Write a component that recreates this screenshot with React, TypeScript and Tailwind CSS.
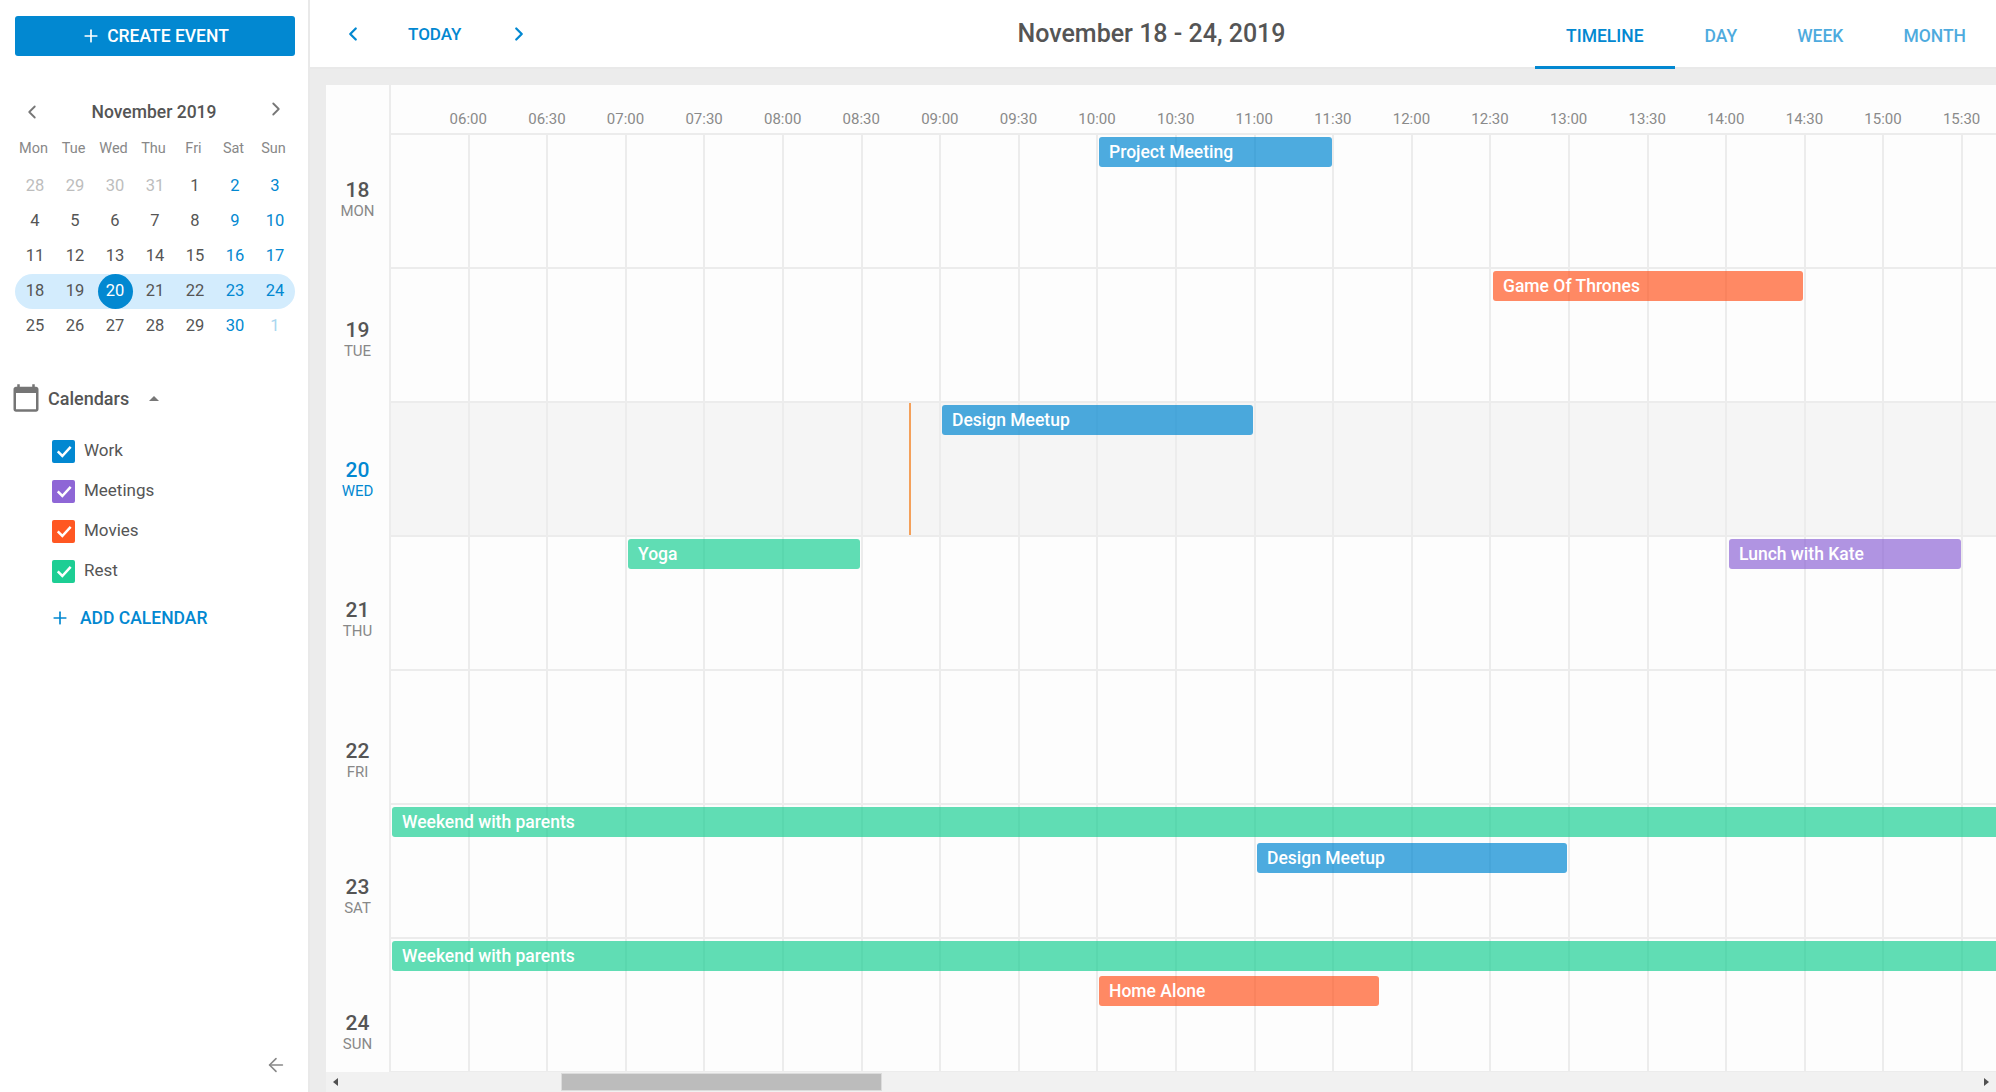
import { ArrowLeft, ChevronLeft, ChevronRight, Plus } from "lucide-react";

const weeks = [
  [28, 29, 30, 31, 1, 2, 3],
  [4, 5, 6, 7, 8, 9, 10],
  [11, 12, 13, 14, 15, 16, 17],
  [18, 19, 20, 21, 22, 23, 24],
  [25, 26, 27, 28, 29, 30, 1],
];

const calendars = [
  { name: "Work", color: "bg-[#0288d1]" },
  { name: "Meetings", color: "bg-[#8e66d6]" },
  { name: "Movies", color: "bg-[#ff5722]" },
  { name: "Rest", color: "bg-[#1dce94]" },
];

const times = [
  "06:00", "06:30", "07:00", "07:30", "08:00", "08:30", "09:00", "09:30", "10:00", "10:30",
  "11:00", "11:30", "12:00", "12:30", "13:00", "13:30", "14:00", "14:30", "15:00", "15:30",
];

const days = [
  { num: 18, name: "MON", h: "h-[140px]" },
  { num: 19, name: "TUE", h: "h-[141px]" },
  { num: 20, name: "WED", h: "h-[139px]", today: true },
  { num: 21, name: "THU", h: "h-[141px]" },
  { num: 22, name: "FRI", h: "h-[140px]" },
  { num: 23, name: "SAT", h: "h-[132px]" },
  { num: 24, name: "SUN", h: "h-[140px]" },
];

const blue = "bg-[#0288d1]/70";
const orange = "bg-[#ff5722]/70";
const purple = "bg-[#8e66d6]/70";
const green = "bg-[#1dce94]/70";

const rows = [
  [{ title: "Project Meeting", pos: "left-[708px] top-[2px] w-[233px]", color: blue }],
  [{ title: "Game Of Thrones", pos: "left-[1102px] top-[2px] w-[310px]", color: orange }],
  [{ title: "Design Meetup", pos: "left-[551px] top-[2px] w-[311px]", color: blue }],
  [
    { title: "Yoga", pos: "left-[237px] top-[2px] w-[232px]", color: green },
    { title: "Lunch with Kate", pos: "left-[1338px] top-[2px] w-[232px]", color: purple },
  ],
  [],
  [
    { title: "Weekend with parents", pos: "left-[1px] top-[2px] w-[1700px]", color: green },
    { title: "Design Meetup", pos: "left-[866px] top-[38px] w-[310px]", color: blue },
  ],
  [
    { title: "Weekend with parents", pos: "left-[1px] top-[2px] w-[1700px]", color: green },
    { title: "Home Alone", pos: "left-[708px] top-[37px] w-[280px]", color: orange },
  ],
];

function dayColor(w: number, d: number) {
  if (w === 0 && d < 4) return "text-[#bdbdbd]";
  if (w === 4 && d === 6) return "text-[#a8d6ef]";
  if (d >= 5) return "text-[#0288d1]";
  return "text-[#555555]";
}

function Sidebar() {
  return (
    <aside className="flex h-full w-[310px] shrink-0 flex-col border-r-2 border-[#e9e9e9] bg-white pl-[15px] pr-[13px] pt-4">
      <button className="flex h-10 w-[280px] shrink-0 items-center justify-center gap-1.5 rounded-[3px] bg-[#0288d1] text-[17.5px] font-medium text-white">
        <Plus size={20} strokeWidth={2} />
        CREATE EVENT
      </button>

      <div className="mt-[44px] flex h-6 w-[280px] items-center justify-between pl-[6px] pr-[8px]">
        <ChevronLeft size={22} strokeWidth={2} className="text-[#777777]" />
        <span className="text-[17.5px] font-medium text-[#555555]">November 2019</span>
        <ChevronRight size={22} strokeWidth={2} className="mb-1.5 text-[#777777]" />
      </div>

      <div className="-ml-[1.5px] mt-[15px] grid h-[20px] w-[280px] grid-cols-7 text-center text-[14.5px] leading-5 text-[#888888]">
        {["Mon", "Tue", "Wed", "Thu", "Fri", "Sat", "Sun"].map((d) => (
          <span key={d}>{d}</span>
        ))}
      </div>

      <div className="mt-[10px] flex w-[280px] flex-col">
        {weeks.map((week, w) => (
          <div key={w} className={`grid h-[35px] grid-cols-7 rounded-full ${w === 3 ? "bg-[#d3ecfd]" : ""}`}>
            {week.map((d, i) =>
              d === 20 ? (
                <div key={i} className="flex items-center justify-center">
                  <span className="flex h-[35px] w-[35px] items-center justify-center rounded-full bg-[#0288d1] text-[16.5px] text-white">
                    {d}
                  </span>
                </div>
              ) : (
                <span key={i} className={`flex items-center justify-center text-[16.5px] ${dayColor(w, i)}`}>
                  {d}
                </span>
              )
            )}
          </div>
        ))}
      </div>

      <div className="mt-[40px] flex h-7 items-center -ml-[4px]">
        <svg viewBox="0 0 24 24" className="h-[30px] w-[30px] fill-[#757575]">
          <path d="M20 3h-1V1h-2v2H7V1H5v2H4c-1.1 0-2 .9-2 2v16c0 1.1.9 2 2 2h16c1.1 0 2-.9 2-2V5c0-1.1-.9-2-2-2zm0 18H4V8h16v13z" />
        </svg>
        <span className="ml-[7px] text-[18px] font-medium text-[#555555]">Calendars</span>
        <span className="ml-[20px] h-0 w-0 border-x-[5px] border-b-[5px] border-x-transparent border-b-[#777777]" />
      </div>

      <div className="mt-[19px] flex flex-col pl-[37px]">
        {calendars.map((c) => (
          <div key={c.name} className="flex h-10 items-center gap-[9px]">
            <span className={`flex h-[23px] w-[23px] items-center justify-center rounded-[2px] ${c.color}`}>
              <svg viewBox="0 0 24 24" className="h-[20px] w-[20px] fill-none stroke-white stroke-[3]">
                <polyline points="4.5,12.5 10,18 20,7" />
              </svg>
            </span>
            <span className="text-[17px] text-[#555555]">{c.name}</span>
          </div>
        ))}
      </div>

      <div className="mt-[15px] flex h-6 items-center gap-[10px] pl-[35px] text-[17.5px] font-medium text-[#0288d1]">
        <Plus size={20} strokeWidth={2} />
        ADD CALENDAR
      </div>

      <div className="mt-auto flex justify-end pb-[16px] pr-[8px]">
        <ArrowLeft size={22} strokeWidth={1.75} className="text-[#888888]" />
      </div>
    </aside>
  );
}

function Header() {
  return (
    <header className="flex h-[69px] shrink-0 items-center border-b-2 border-[#e9e9e9] bg-white">
      <div className="flex w-[458px] shrink-0 items-center pl-[32px] text-[#0288d1]">
        <ChevronLeft size={22} strokeWidth={2.5} />
        <span className="ml-[44px] pt-[3px] text-[17px] font-medium">TODAY</span>
        <ChevronRight size={22} strokeWidth={2.5} className="ml-[47px]" />
      </div>
      <h1 className="min-w-0 flex-1 text-center text-[25px] font-medium text-[#555555]">November 18 - 24, 2019</h1>
      <nav className="-mb-[2px] flex h-[69px] shrink-0 text-[17.5px] font-medium text-[#0288d1]">
        <span className="flex items-center border-b-[3px] border-[#0288d1] px-[31px] pt-[6px]">TIMELINE</span>
        <span className="flex items-center px-[30px] pt-[3px] opacity-70">DAY</span>
        <span className="flex items-center px-[30px] pt-[3px] opacity-70">WEEK</span>
        <span className="flex items-center px-[30px] pt-[3px] opacity-70">MONTH</span>
      </nav>
    </header>
  );
}

function Timeline() {
  return (
    <div className="flex min-h-0 flex-1 flex-col overflow-hidden bg-[#fdfdfd]">
      <div className="flex min-h-0 flex-1 overflow-hidden">
        <div className="flex w-[65px] shrink-0 flex-col border-r-2 border-[#ececec] pt-[43px]">
          {days.map((d) => (
            <div
              key={d.num}
              className={`flex shrink-0 flex-col items-center justify-center ${d.h} ${d.today ? "text-[#0288d1]" : "text-[#888888]"}`}
            >
              <span className={`text-[21px] font-medium leading-[24px] ${d.today ? "" : "text-[#555555]"}`}>{d.num}</span>
              <span className="pt-[1px] text-[15px] leading-[16px]">{d.name}</span>
            </div>
          ))}
        </div>

        <div className="min-w-0 flex-1 overflow-hidden">
          <div className="flex h-[50px] items-end border-b-2 border-[#ececec] pb-[4px] pl-[38px]">
            {times.map((t) => (
              <span key={t} className="w-[78.6px] shrink-0 text-center text-[15px] leading-5 text-[#8a8a8a]">
                {t}
              </span>
            ))}
          </div>

          {rows.map((events, r) => (
            <div
              key={r}
              className={`relative flex h-[134px] border-b-2 border-[#ececec] ${r === 2 ? "bg-[#f5f5f5]" : ""}`}
            >
              {Array.from({ length: 21 }).map((_, c) => (
                <div key={c} className="h-full w-[78.6px] shrink-0 border-r-2 border-[#ececec]" />
              ))}
              {r === 2 && <div className="absolute left-[518px] top-0 h-full w-[2px] bg-[#f4a05a]" />}
              {events.map((e) => (
                <div
                  key={e.title}
                  className={`absolute flex h-[30px] items-center overflow-hidden rounded-[3px] pl-[10px] pt-[1px] text-[17.5px] font-medium text-white ${e.pos} ${e.color}`}
                >
                  {e.title}
                </div>
              ))}
            </div>
          ))}
        </div>
      </div>

      <div className="flex h-[20px] shrink-0 items-center bg-[#f1f1f1] px-[7px]">
        <span className="h-0 w-0 border-y-[4px] border-r-[5px] border-y-transparent border-r-[#505050]" />
        <span className="ml-[223px] h-[18px] w-[321px] border border-[#dcdcdc] bg-[#bcbcbc]" />
        <span className="ml-auto h-0 w-0 border-y-[4px] border-l-[5px] border-y-transparent border-l-[#505050]" />
      </div>
    </div>
  );
}

export default function App() {
  return (
    <div className="flex h-screen w-screen overflow-hidden bg-white font-[family-name:Roboto,sans-serif]">
      <Sidebar />
      <main className="flex min-w-0 flex-1 flex-col">
        <Header />
        <div className="flex min-h-0 flex-1 flex-col bg-[#ececec] pl-4 pt-4">
          <Timeline />
        </div>
      </main>
    </div>
  );
}
